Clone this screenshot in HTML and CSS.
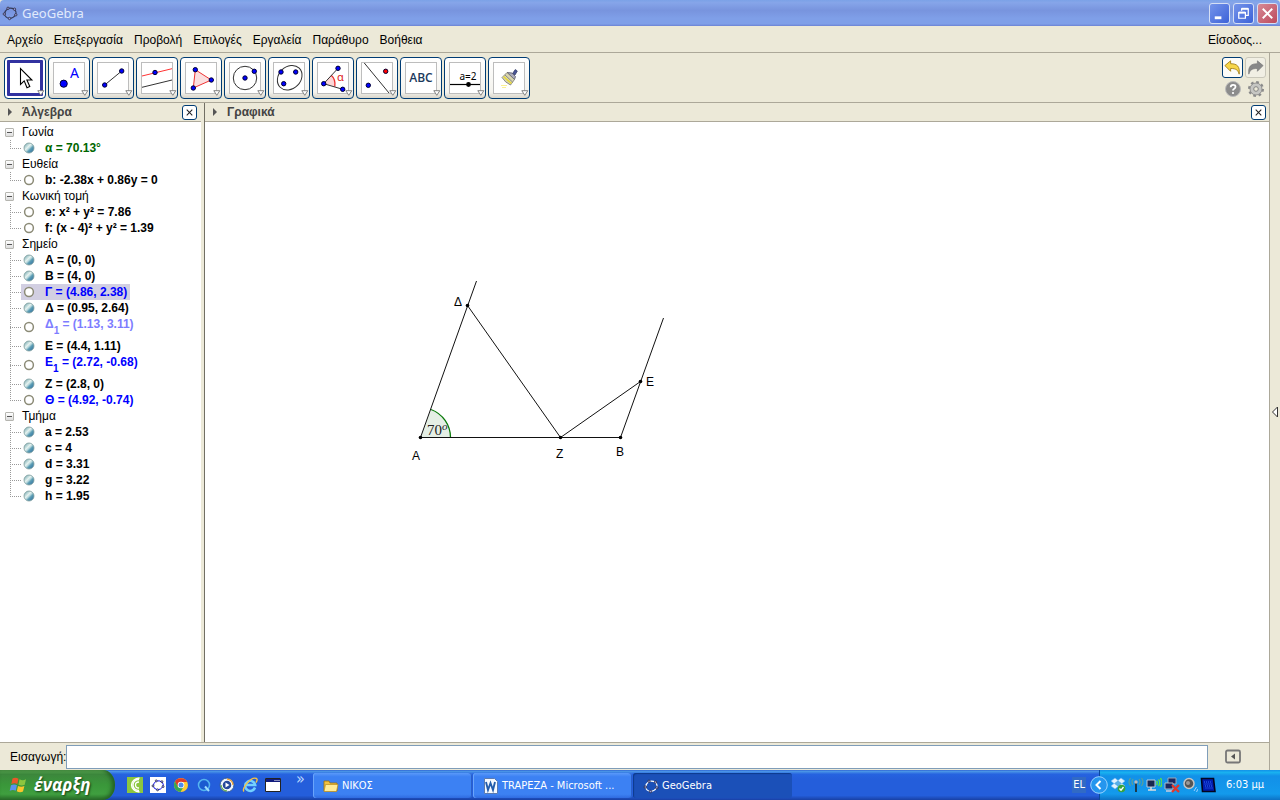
FILE: index.html
```html
<!DOCTYPE html>
<html lang="el">
<head>
<meta charset="utf-8">
<title>GeoGebra</title>
<link rel="stylesheet" href="styles.css">
</head>
<body>
<svg class="defs" width="0" height="0" aria-hidden="true">
  <defs>
    <linearGradient id="ball" x1="0" y1="0" x2="1" y2="1">
      <stop offset="0.1" stop-color="#7fb0b8"/><stop offset="0.4" stop-color="#e4f1ee"/><stop offset="0.52" stop-color="#b5d6dc"/><stop offset="0.62" stop-color="#5f9fb4"/><stop offset="1" stop-color="#1f64a0"/>
    </linearGradient>
    <symbol id="on" viewBox="0 0 12 12"><circle cx="6" cy="6" r="5" fill="url(#ball)" stroke="#7c9c9c" stroke-width="0.8"/></symbol>
    <symbol id="off" viewBox="0 0 12 12"><circle cx="6" cy="6" r="4.400" fill="#fff" stroke="#8c8b77" stroke-width="1.500"/></symbol>
    <symbol id="logo" viewBox="0 0 16 16">
      <path d="M6 3.500Q9.500 2.500 12.500 4.500Q15 7 13.500 10Q11 13.500 7.500 13.500Q3 12.500 2.500 9Q3 5.500 6 3.500z" fill="none" stroke="currentColor" stroke-width="1.100"/>
      <g fill="#9a9aef" stroke="#222" stroke-width="0.7"><circle cx="6" cy="3.300" r="1.200"/><circle cx="12.500" cy="4.200" r="1.200"/><circle cx="13.800" cy="9.800" r="1.200"/><circle cx="7.500" cy="13.500" r="1.200"/><circle cx="2.300" cy="9" r="1.200"/></g>
    </symbol>
    <symbol id="more" viewBox="0 0 8 6"><path d="M.8.7h6L3.800 5.300z" fill="#fff" stroke="#777" stroke-width="0.9"/></symbol>
    <symbol id="close" viewBox="0 0 14 14"><path d="M4 4l6 6M10 4l-6 6" stroke="#222" stroke-width="1.100"/></symbol>
    <symbol id="tri" viewBox="0 0 6 10"><path d="M1 1v8l4-4z" fill="#555"/></symbol>
  </defs>
</svg>
<div class="window">
  <header class="titlebar">
    <svg class="icon16 title-logo"><use href="#logo"/></svg>
    <h1>GeoGebra</h1>
    <div class="winbuttons">
      <button class="win" aria-label="Ελαχιστοποίηση"><svg viewBox="0 0 20 20"><path d="M5 13h7v3H5z" fill="#fff"/></svg></button>
      <button class="win" aria-label="Επαναφορά"><svg viewBox="0 0 20 20"><path d="M8 7V5h7v7h-3" fill="none" stroke="#fff" stroke-width="1.300"/><path d="M8 5h7" stroke="#fff" stroke-width="2"/><path d="M5 9h7v6H5z" fill="none" stroke="#fff" stroke-width="1.300"/><path d="M5 9h7" stroke="#fff" stroke-width="2"/></svg></button>
      <button class="win red" aria-label="Κλείσιμο"><svg viewBox="0 0 20 20"><path d="M5 5l10 10M15 5L5 15" stroke="#fff" stroke-width="2"/></svg></button>
    </div>
  </header>
  <nav class="menubar">
    <button>Αρχείο</button><button>Επεξεργασία</button><button>Προβολή</button><button>Επιλογές</button><button>Εργαλεία</button><button>Παράθυρο</button><button>Βοήθεια</button>
    <button class="login">Είσοδος...</button>
  </nav>
  <div class="work">
    <main class="main">
      <div class="toolbar">
        <button class="tool active" aria-label="Μετακίνηση"><svg viewBox="1 1 40 40"><path d="M16.500 11.500v16l3.700-3.600 2.800 6.800 2.800-1.200-2.900-6.500h5z" fill="#fff" stroke="#000" stroke-width="1.100"/><use href="#more" x="33" y="33" width="8" height="6"/></svg></button>
        <button class="tool" aria-label="Σημείο"><svg viewBox="1 1 40 40"><rect class="frame" x="5.500" y="5.500" width="31" height="31"/><circle class="pt" cx="15.700" cy="26.700" r="3.600"/><text x="22" y="21" class="t-a">A</text><use href="#more" x="33" y="33" width="8" height="6"/></svg></button>
        <button class="tool" aria-label="Τμήμα"><svg viewBox="1 1 40 40"><rect class="frame" x="5.500" y="5.500" width="31" height="31"/><path class="ln" d="M12.700 28l17-14"/><circle class="pt" cx="12.700" cy="28" r="2.200"/><circle class="pt" cx="29.700" cy="14" r="2.200"/><use href="#more" x="33" y="33" width="8" height="6"/></svg></button>
        <button class="tool" aria-label="Παράλληλη"><svg viewBox="1 1 40 40"><rect class="frame" x="5.500" y="5.500" width="31" height="31"/><path d="M6 19l30-7.300" stroke="#f33"/><path class="ln" d="M6 30.300L36 23"/><circle class="pt" cx="19" cy="15.500" r="2.200"/><use href="#more" x="33" y="33" width="8" height="6"/></svg></button>
        <button class="tool" aria-label="Πολύγωνο"><svg viewBox="1 1 40 40"><rect class="frame" x="5.500" y="5.500" width="31" height="31"/><path d="M15.300 12.700l16 10.300-18 8z" fill="#fbdede" stroke="#e33"/><circle class="pt" cx="15.300" cy="12.700" r="2.200"/><circle class="pt" cx="31.300" cy="23" r="2.200"/><circle class="pt" cx="13.300" cy="31" r="2.200"/><use href="#more" x="33" y="33" width="8" height="6"/></svg></button>
        <button class="tool" aria-label="Κύκλος"><svg viewBox="1 1 40 40"><rect class="frame" x="5.500" y="5.500" width="31" height="31"/><circle class="ln" cx="21" cy="21" r="11.700"/><circle class="pt" cx="21" cy="21" r="2.200"/><circle class="pt" cx="30.300" cy="14.300" r="2.200"/><use href="#more" x="33" y="33" width="8" height="6"/></svg></button>
        <button class="tool" aria-label="Κωνική τομή"><svg viewBox="1 1 40 40"><rect class="frame" x="5.500" y="5.500" width="31" height="31"/><ellipse class="ln" cx="21.700" cy="20.700" rx="13.500" ry="11" transform="rotate(-45 21.700 20.700)"/><circle class="pt" cx="13" cy="15" r="2.200"/><circle class="pt" cx="27.700" cy="15" r="2.200"/><circle class="pt" cx="15.700" cy="26.700" r="2.200"/><use href="#more" x="33" y="33" width="8" height="6"/></svg></button>
        <button class="tool" aria-label="Γωνία"><svg viewBox="1 1 40 40"><rect class="frame" x="5.500" y="5.500" width="31" height="31"/><path d="M11.700 26.700l7.500-8.500q4.600 4 3.600 11.400z" fill="#fbd6d6"/><path d="M19.200 18.200q4.600 4 3.600 11.400" fill="none" stroke="#e33" stroke-width="1.300"/><path class="ln" d="M26 11.300L11.700 26.700l19 5.600"/><circle class="pt" cx="11.700" cy="26.700" r="2.200"/><circle class="pt" cx="26" cy="11.300" r="2.200"/><circle class="pt" cx="30.700" cy="32.300" r="2.200"/><text x="25" y="24" class="t-alpha">α</text><use href="#more" x="33" y="33" width="8" height="6"/></svg></button>
        <button class="tool" aria-label="Συμμετρία"><svg viewBox="1 1 40 40"><rect class="frame" x="5.500" y="5.500" width="31" height="31"/><path class="ln" d="M8.300 6L33 36"/><circle class="pt redpt" cx="29.700" cy="14.300" r="2.200"/><circle class="pt" cx="12.300" cy="28.300" r="2.200"/><use href="#more" x="33" y="33" width="8" height="6"/></svg></button>
        <button class="tool" aria-label="Κείμενο"><svg viewBox="1 1 40 40"><rect class="frame" x="5.500" y="5.500" width="31" height="31"/><text x="21" y="25" class="t-abc">ABC</text><use href="#more" x="33" y="33" width="8" height="6"/></svg></button>
        <button class="tool" aria-label="Δρομέας"><svg viewBox="1 1 40 40"><rect class="frame" x="5.500" y="5.500" width="31" height="31"/><text x="24" y="23" class="t-slider">a=2</text><path d="M6 27.500h30" stroke="#000" stroke-width="1.200"/><circle cx="24.500" cy="27.500" r="2.400"/><use href="#more" x="33" y="33" width="8" height="6"/></svg></button>
        <button class="tool" aria-label="Μορφοποίηση"><svg viewBox="1 1 40 40"><rect class="frame" x="5.500" y="5.500" width="31" height="31"/><path d="M24.500 16.500l2.800-4 2 1.500-2.300 4z" fill="#4b5696" stroke="#27305f" stroke-width="0.700"/><path d="M19 15.500l5 .5 3.500 3.500-1 3z" fill="#aab" stroke="#556" stroke-width="0.800"/><path d="M19 15.500l7.500 7-4 5.500q-5.500-2.500-8.500-7.500z" fill="#d8d5b0" stroke="#666" stroke-width="0.700"/><path d="M15.500 19.500l8 7" stroke="#e8d836" stroke-width="1.500"/><path d="M17 18l7.500 7" stroke="#777" stroke-width="0.800"/><path d="M13.500 28.500h6M14.500 30.500h3" stroke="#f5e32a" stroke-dasharray="1 1"/><use href="#more" x="33" y="33" width="8" height="6"/></svg></button>
        <div class="side-tools">
          <button class="small lit" aria-label="Αναίρεση"><svg viewBox="0 0 20 20"><path d="M2 8l6-5v3c7 0 10 3 9 11-1-4-3-6-9-6v3z" fill="#f7d64a" stroke="#a07a10" stroke-width="0.900"/></svg></button>
          <button class="small" aria-label="Επανάληψη"><svg viewBox="0 0 20 20"><path d="M18 8l-6-5v3C5 6 2 9 3 17c1-4 3-6 9-6v3z" fill="#888" stroke="#777" stroke-width="0.700"/></svg></button>
          <button class="flat" aria-label="Βοήθεια"><svg viewBox="0 0 18 18"><circle cx="9" cy="9" r="7.500" fill="#8c8c8c" stroke="#bbb"/><path d="M6.700 7.300q0-2.500 2.400-2.500t2.400 2q0 1.300-1.300 2t-1.200 1.700" fill="none" stroke="#fff" stroke-width="1.800"/><circle cx="9" cy="13" r="1.100" fill="#fff"/></svg></button>
          <button class="flat" aria-label="Ρυθμίσεις"><svg viewBox="0 0 18 18"><circle cx="9" cy="9" r="6.800" fill="none" stroke="#8a8a8a" stroke-width="2.400" stroke-dasharray="2.670 2.670"/><circle cx="9" cy="9" r="6" fill="#c6c6c3" stroke="#8a8a8a" stroke-width="0.900"/><circle cx="9" cy="9" r="2.300" fill="#ece9d8" stroke="#858585"/></svg></button>
        </div>
      </div>
      <div class="panels">
        <section class="algebra">
          <h2 class="panel-head"><svg class="tri"><use href="#tri"/></svg>Άλγεβρα<button class="x" aria-label="Κλείσιμο"><svg><use href="#close"/></svg></button></h2>
          <ul class="tree">
            <li><span class="group">Γωνία</span><ul>
              <li class="green"><svg><use href="#on"/></svg><span>α = 70.13°</span></li></ul></li>
            <li><span class="group">Ευθεία</span><ul>
              <li><svg><use href="#off"/></svg><span>b: -2.38x + 0.86y = 0</span></li></ul></li>
            <li><span class="group">Κωνική τομή</span><ul>
              <li><svg><use href="#off"/></svg><span>e: x² + y² = 7.86</span></li>
              <li><svg><use href="#off"/></svg><span>f: (x - 4)² + y² = 1.39</span></li></ul></li>
            <li><span class="group">Σημείο</span><ul>
              <li><svg><use href="#on"/></svg><span>Α = (0, 0)</span></li>
              <li><svg><use href="#on"/></svg><span>Β = (4, 0)</span></li>
              <li class="blue selected"><svg><use href="#off"/></svg><span>Γ = (4.86, 2.38)</span></li>
              <li><svg><use href="#on"/></svg><span>Δ = (0.95, 2.64)</span></li>
              <li class="pale tall"><svg><use href="#off"/></svg><span>Δ<sub>1</sub> = (1.13, 3.11)</span></li>
              <li><svg><use href="#on"/></svg><span>Ε = (4.4, 1.11)</span></li>
              <li class="blue tall"><svg><use href="#off"/></svg><span>Ε<sub>1</sub> = (2.72, -0.68)</span></li>
              <li><svg><use href="#on"/></svg><span>Ζ = (2.8, 0)</span></li>
              <li class="blue"><svg><use href="#off"/></svg><span>Θ = (4.92, -0.74)</span></li></ul></li>
            <li><span class="group">Τμήμα</span><ul>
              <li><svg><use href="#on"/></svg><span>a = 2.53</span></li>
              <li><svg><use href="#on"/></svg><span>c = 4</span></li>
              <li><svg><use href="#on"/></svg><span>d = 3.31</span></li>
              <li><svg><use href="#on"/></svg><span>g = 3.22</span></li>
              <li><svg><use href="#on"/></svg><span>h = 1.95</span></li></ul></li>
          </ul>
        </section>
        <section class="graphics">
          <h2 class="panel-head"><svg class="tri"><use href="#tri"/></svg>Γραφικά<button class="x" aria-label="Κλείσιμο"><svg><use href="#close"/></svg></button></h2>
          <svg class="drawing" role="img" aria-label="Γεωμετρικό σχήμα">
            <path d="M215.500 315.500L226 287.500A30 30 0 0 1 245.500 315.500z" fill="#e5efe5"/>
            <path d="M226 287.500A30 30 0 0 1 245.500 315.500" fill="none" stroke="#0a7a0a" stroke-width="1.300"/>
            <g fill="none" stroke="#111"><path d="M215.500 315.500h200M215.500 315.500L271.500 159M262.500 183.500l93 132 80-56M415.500 315.500L458.500 196"/></g>
            <g><circle cx="215.500" cy="315.500" r="1.800"/><circle cx="355.500" cy="315.500" r="1.800"/><circle cx="415.500" cy="315.500" r="1.800"/><circle cx="262.500" cy="183.500" r="1.800"/><circle cx="435.500" cy="259.500" r="1.800"/></g>
            <g class="labels"><text x="207" y="338">Α</text><text x="351" y="336">Ζ</text><text x="411" y="334">Β</text><text x="249" y="184">Δ</text><text x="441" y="264">Ε</text></g>
            <text class="angle" x="222" y="313">70<tspan class="deg" dy="-5">o</tspan></text>
          </svg>
        </section>
      </div>
      <div class="inputbar">
        <label for="cmd">Εισαγωγή:</label><input id="cmd" type="text">
        <button class="flat" aria-label="Βοήθεια εισαγωγής"><svg viewBox="0 0 18 18"><rect x="2" y="2.500" width="14" height="12" rx="1.500" fill="none" stroke="#777" stroke-width="1.800"/><path d="M11 5.500v6L7 8.500z" fill="#555"/></svg></button>
      </div>
    </main>
    <button class="edge" aria-label="Πλευρική γραμμή"><svg viewBox="0 0 8 12"><path d="M6.500 1v10L1.500 6z" fill="#fff" stroke="#333"/></svg></button>
  </div>
  <footer class="taskbar">
    <button class="start"><svg viewBox="0 0 20 20"><path d="M3.500 3.500q3-1.800 6 .2L8.300 9q-2.600-1.600-6 0z" fill="#e8582a"/><path d="M10.500 4.300q3 1.700 6.500 0l-1.300 5.400q-3 1.500-6.200 0z" fill="#8cc63f"/><path d="M2 10.200q3.300-1.500 6 .1l-1.300 5.400q-2.500-1.600-6 0z" fill="#5b92ee"/><path d="M9 11q3.200 1.500 6.400 0L14 16.500q-3 1.500-6.200-.2z" fill="#fbc52c"/></svg>έναρξη</button>
    <div class="quick">
      <a href="#" aria-label="Camtasia"><svg viewBox="0 0 16 16"><path fill="#8cc63f" d="M0 0h16v16H0z"/><path d="M12 2.500a6 5.500 0 0 0 0 11M12 5a3.500 3 0 0 0 0 6M12.500 1a9 7 0 0 0-8 7 9 7 0 0 0 8 7" fill="none" stroke="#fff" stroke-width="1.300"/></svg></a>
      <a href="#" aria-label="GeoGebra"><svg viewBox="0 0 16 16"><path fill="#fff" d="M0 0h16v16H0z"/><use href="#logo" x="1" y="1" width="14" height="14"/></svg></a>
      <a href="#" aria-label="Chrome"><svg viewBox="0 0 16 16"><circle cx="8" cy="8" r="7" fill="#fc3"/><path d="M2 4.500A7 7 0 0 1 14.200 5H8L4.500 10z" fill="#dd3d2c"/><path d="M2 4.500A7 7 0 0 0 7.500 15l3.200-5.500L5 10z" fill="#36a852"/><circle cx="8" cy="8" r="3.300" fill="#fff"/><circle cx="8" cy="8" r="2.500" fill="#4a8cf0"/></svg></a>
      <a href="#" aria-label="QuickTime"><svg viewBox="0 0 16 16"><circle cx="8" cy="8" r="5.500" fill="#1b5ad0" stroke="#55b5f0" stroke-width="1.500"/><path d="M9 9.500l4 4.500" stroke="#9bdcff" stroke-width="2"/></svg></a>
      <a href="#" aria-label="Media Player"><svg viewBox="0 0 16 16"><circle cx="8" cy="8" r="7" fill="#e9f1fc" stroke="#315b9c"/><path d="M8 1.500a6.500 6.500 0 0 1 6.500 6.500H8z" fill="#f0a030"/><path d="M1.500 8A6.500 6.500 0 0 0 8 14.500V8z" fill="#65ad4b"/><circle cx="8" cy="8" r="5.300" fill="#fff"/><circle cx="8" cy="8" r="4.300" fill="#24489a"/><path d="M6.500 5.500v5l4-2.500z" fill="#fff"/></svg></a>
      <a href="#" aria-label="Internet Explorer"><svg viewBox="0 0 16 16"><path d="M13 10.500A5 5 0 1 1 13.200 8H4.500" fill="none" stroke="#73d0ff" stroke-width="2.500"/><path d="M2 14.500C-1 12 9-1 14.500 1.500q1.500 1-.5 4" fill="none" stroke="#f4c244" stroke-width="1.400"/></svg></a>
      <a href="#" aria-label="Επιφάνεια εργασίας"><svg viewBox="0 0 16 16"><path d="M.5 1.500h15v13H.5z" fill="#fff" stroke="#222"/><path fill="#101a7c" d="M1 2h14v3H1z"/><path d="M9.500 3.500h5" stroke="#fff" stroke-dasharray="1 1"/></svg></a>
      <span class="chev">»</span>
    </div>
    <div class="tasks">
      <button class="task"><svg viewBox="0 0 16 16"><path d="M1 13V3h5l1 2h7v8z" fill="#f1c040" stroke="#9c6e08" stroke-width="0.800"/><path d="M2.500 6.500h12.500l-1.500 7H1z" fill="#ffeb96" stroke="#b98b1c" stroke-width="0.700"/></svg>ΝΙΚΟΣ</button>
      <button class="task"><svg viewBox="0 0 16 16"><path d="M1.500.5h10l3 3v12h-13z" fill="#f5f9ff" stroke="#5a7ab0"/><path d="M3 4l2 8 2.500-7L10 12l2-8" fill="none" stroke="#235cab" stroke-width="1.900"/></svg>TRAPEZA - Microsoft ...</button>
      <button class="task pressed"><svg><use href="#logo"/></svg>GeoGebra</button>
    </div>
    <span class="lang">EL</span>
    <div class="tray">
      <button class="expand" aria-label="Εμφάνιση εικονιδίων"><svg viewBox="0 0 18 18"><circle cx="9" cy="9" r="8.300" fill="#2596ee" stroke="#9ad5ff"/><path d="M10.500 5L6.500 9l4 4" fill="none" stroke="#fff" stroke-width="2"/></svg></button>
      <svg viewBox="0 0 16 16"><path d="M1 4l4-3 3 2.500L11 1l4 3-3 2.500L15 9l-4 3-3-2.500L5 12 1 9l3-2.500z" fill="#e2f2ff" stroke="#6fb6ee" stroke-width="0.600"/><path d="M4 6.500l4-3 4 3-4 3z" fill="#58aee6"/><circle cx="11.500" cy="11.500" r="3.800" fill="#37a33c"/><path d="M9.500 11.500l1.500 1.700 2.500-3.200" fill="none" stroke="#fff" stroke-width="1.300"/></svg>
      <svg viewBox="0 0 16 16"><path d="M8 5v10" stroke="#222" stroke-width="1.600"/><circle cx="8" cy="5" r="1.700" fill="#bbb"/><path d="M5 2q-2 3 0 6M2.500 1q-3 4 0 8M11 2q2 3 0 6M13.500 1q3 4 0 8" fill="none" stroke="#5f9f92" stroke-width="1.200"/></svg>
      <svg viewBox="0 0 16 16"><path d="M1 3h8v7H1z" fill="#182850" stroke="#bcd"/><path d="M2 13h8M5 10v3" stroke="#ddd" stroke-width="1.500"/><path d="M10.500 4q1.500 2 0 4M12.500 2.500q2.500 3 0 6.500M14.500 1q3 5 0 9" fill="none" stroke="#62e53c" stroke-width="1.300"/></svg>
      <svg viewBox="0 0 16 16"><path d="M4 1h8v6H4z" fill="#1c2860" stroke="#9ab"/><path d="M1 6h8v6H1z" fill="#1c2860" stroke="#abc"/><path d="M2 14h7" stroke="#ccd" stroke-width="1.500"/><path d="M8 8l7 7M15 8l-7 7" stroke="#e3362c" stroke-width="2.300"/></svg>
      <svg viewBox="0 0 16 16"><circle cx="7" cy="6.500" r="5" fill="#555" stroke="#c5c5c5" stroke-width="1.500"/><circle cx="6" cy="6" r="2" fill="#999"/><path d="M12 14l2.500-4M14.500 15l1.500-3" stroke="#9bd0ff"/></svg>
      <svg viewBox="0 0 16 16"><path d="M1.500 1.500h12l1.500 13H2.500z" fill="#001cae" stroke="#03061f" stroke-width="1.600"/><path d="M4 5h8M4.500 7h8M5 9h8M5.500 11h7" stroke="#3468ff" stroke-dasharray="1 1"/></svg>
      <time>6:03 μμ</time>
    </div>
  </footer>
</div>
</body>
</html>
```
FILE: styles.css
```css
* { box-sizing: border-box; }
body { margin: 0; font: 12px/16px "Liberation Sans", Arial, sans-serif; color: #000; background: #ece9d8; }
button { font: inherit; color: inherit; padding: 0; margin: 0; border: 0; background: none; }
h1, h2, ul { margin: 0; padding: 0; }
ul { list-style: none; }
svg { display: block; flex: none; }
.defs { position: absolute; }
.icon16 { width: 16px; height: 16px; }
.window { display: flex; flex-direction: column; height: 100vh; }

.titlebar { display: flex; align-items: center; height: 26px; padding: 0 2px; gap: 4px; border-radius: 4px 4px 0 0; background: linear-gradient(#7ba2e7, #86a5e9 10%, #7894de 40%, #7f9fe8 70%, #7f9fe8 92%, #6b82d3); }
.title-logo { color: #333a5a; }
.titlebar h1 { flex: 1; font: 13px/20px "Noto Sans", sans-serif; color: #e0eafc; }
.winbuttons { display: flex; gap: 3px; }
.win { width: 21px; height: 21px; border: 1px solid #d5dff5; border-radius: 3px; background: linear-gradient(135deg, #7594ea, #3c62d8); }
.win.red { background: linear-gradient(135deg, #d78a96, #bd4a5c); }

.menubar { display: flex; align-items: center; gap: 11px; height: 27px; padding: 2px 18px 0 7px; border-bottom: 1px solid #aca899; }
.login { margin-left: auto; }

.work { display: flex; flex: 1; min-height: 0; }
.main { display: flex; flex-direction: column; flex: 1; min-width: 0; border-right: 1px solid #aca899; }
.edge { display: flex; align-items: center; justify-content: center; width: 10px; }
.edge svg { width: 8px; height: 12px; }

.toolbar { display: flex; align-items: center; gap: 2px; height: 50px; padding: 0 3px 0 4px; border-bottom: 1px solid #aca899; }
.tool { width: 42px; height: 42px; border: 1px solid #003c74; border-radius: 4px; background: linear-gradient(#fff, #f4f3ee 85%, #d9d5ca); }
.tool.active { background: #fff; box-shadow: inset 0 0 0 2px #fff, inset 0 0 0 5px #3232a0; }
.frame { fill: #fff; stroke: #bdbdbd; }
.pt { fill: #00f; stroke: #003; stroke-width: 1px; }
.redpt { fill: #f00; }
.ln { fill: none; stroke: #333; stroke-width: 1px; }
.t-a { font: 14px "Noto Sans", sans-serif; fill: #00f; stroke: #00f; stroke-width: 0; }
.t-alpha { font: 11px "Noto Sans", sans-serif; fill: #d22; }
.t-abc { font: 600 12px "Open Sans", sans-serif; fill: #1b3a5c; text-anchor: middle; }
.t-slider { font: 10px "Noto Sans", sans-serif; text-anchor: middle; }
.side-tools { display: grid; grid-template-columns: 21px 21px; gap: 2px; margin-left: auto; justify-items: center; }
.small { width: 21px; height: 21px; border: 1px solid #c9c7ba; border-radius: 3px; background: #f1efe4; }
.lit { border-color: #003c74; background: #fdfcf8; }
.flat svg { width: 18px; height: 18px; }

.panels { display: flex; flex: 1; min-height: 0; }
.algebra { width: 205px; flex: none; background: #fff; border-right: 1px solid #716f64; box-shadow: inset -3px 0 #ece9d8; }
.graphics { display: flex; flex-direction: column; flex: 1; min-width: 0; background: #fff; }
.panel-head { display: flex; align-items: center; gap: 9px; height: 19px; padding: 0 3px 0 7px; background: #ece9d8; border-bottom: 1px solid #aca899; font: bold 12px/18px "Liberation Sans", Arial, sans-serif; color: #444; }
.algebra .panel-head { margin-right: 3px; }
.tri { width: 6px; height: 10px; }
.x { width: 15px; height: 15px; margin-left: auto; border: 1px solid #003c74; border-radius: 3px; background: #fff; }
.algebra .x { margin-right: 1px; }
.x svg { width: 13px; height: 13px; }

.tree { padding: 2px 0 0 5px; }
.group { display: flex; align-items: center; gap: 8px; height: 16px; line-height: 18px; }
.group::before { content: ""; width: 9px; height: 9px; border: 1px solid #b5b5b0; border-radius: 1px; box-sizing: border-box; background: linear-gradient(#555, #555) center / 5px 1px no-repeat, linear-gradient(#fff, #ddd); }
.tree ul { margin-left: 5px; }
.tree ul li { display: flex; align-items: center; height: 16px; font-weight: bold; line-height: 18px; background: repeating-linear-gradient(#999 0 1px, transparent 1px 2px) 0 0 / 1px 100% no-repeat, repeating-linear-gradient(90deg, #999 0 1px, transparent 1px 2px) 0 50% / 11px 1px no-repeat; }
.tree ul li:last-child { background-size: 1px 50%, 11px 1px; }
.tree ul svg { width: 12px; height: 12px; margin: 0 10px 0 13px; }
.tree ul li.tall { height: 22px; line-height: 16px; }
.tall span { align-self: flex-start; }
.tree sub { font-size: 10px; line-height: 1px; vertical-align: -6px; }
.green { color: #060; }
.blue { color: #00f; }
.pale { color: #7d7dff; }
.selected { position: relative; z-index: 0; width: 120px; }
.selected::before { content: ""; position: absolute; z-index: -1; inset: 0 0 0 11px; background: #d2cfe2; }

.drawing { flex: 1; width: 100%; min-height: 0; }
.labels { font-size: 12px; }
.angle { font: 15px "Liberation Serif", serif; fill: #222; }
.deg { font-size: 11px; font-style: italic; }

.inputbar { display: flex; align-items: center; height: 28px; padding: 0 27px 0 10px; border-top: 1px solid #aca899; }
.inputbar input { flex: 1; min-width: 0; height: 24px; margin-right: 16px; border: 1px solid #7f9db9; background: #fff; font: inherit; }

.taskbar { display: flex; align-items: stretch; height: 30px; color: #fff; font: 11px/14px "DejaVu Sans Condensed", "DejaVu Sans", sans-serif; background: linear-gradient(#3168d5, #4993e6 5%, #2663e0 14%, #245edb 30%, #245edb 85%, #1941a5); }
.taskbar a, .taskbar button, .lang { display: flex; align-items: center; }
.start { width: 115px; padding-left: 9px; gap: 5px; border-radius: 0 12px 12px 0 / 0 15px 15px 0; background: linear-gradient(#5eac56, #3c873c 15%, #3a973a 50%, #3f9f3f 80%, #2b6f2b); box-shadow: inset -3px 0 4px #246024; font: italic bold 17px/24px "Open Sans", sans-serif; text-shadow: 1px 1px 2px #143e14; }
.taskbar .start svg { width: 20px; height: 20px; }
.taskbar svg { width: 16px; height: 16px; }
.quick { display: flex; align-items: center; gap: 7px; padding-left: 12px; width: 197px; color: #333; }
.chev { margin: -12px 0 0 8px; font-size: 16px; color: #b9d8ff; }
.tasks { display: flex; flex: 1; gap: 1px; padding: 3px 0 2px 1px; min-width: 0; }
.task { width: 159px; gap: 3px; padding-left: 10px; border-radius: 3px; background: linear-gradient(#5a99fa, #3c81f3 15%, #3c81f3 85%, #2f6be0); box-shadow: inset 1px 0 #6aa5fb, inset -1px 0 #2a60c8; white-space: nowrap; }
.task.pressed { background: #1b50b8; box-shadow: inset 1px 1px 1px #0e3a8c; }
.lang { align-self: center; height: 16px; margin-right: 13px; padding: 0 1px; background: #316ac5; }
.tray { display: flex; align-items: center; gap: 2px; padding-right: 16px; background: linear-gradient(#1290e8, #19b2f0 8%, #1290e8 20%, #139aec 80%, #0d72c4); box-shadow: inset 1px 0 #0a4a9c; }
.expand { margin-left: -9px; }
.taskbar .expand svg { width: 18px; height: 18px; }
.tray time { margin-left: 8px; white-space: nowrap; }
```
